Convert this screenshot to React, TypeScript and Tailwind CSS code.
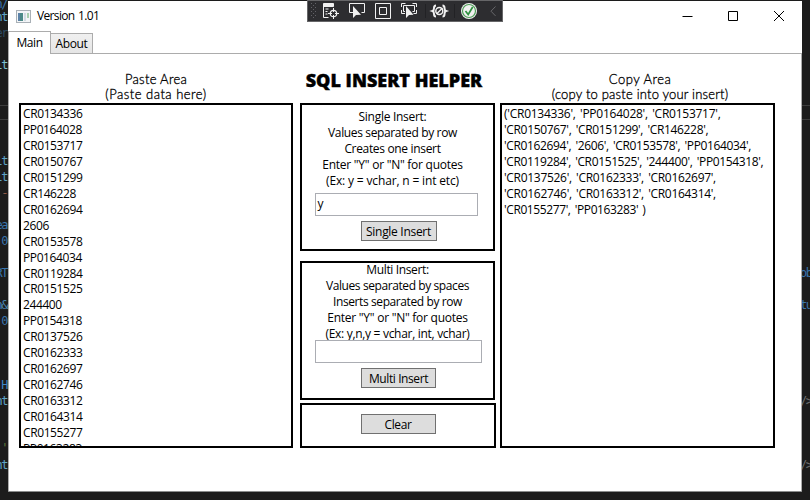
import React from "react";

const rows = [
  "CR0134336", "PP0164028", "CR0153717", "CR0150767", "CR0151299", "CR146228",
  "CR0162694", "2606", "CR0153578", "PP0164034", "CR0119284", "CR0151525",
  "244400", "PP0154318", "CR0137526", "CR0162333", "CR0162697", "CR0162746",
  "CR0163312", "CR0164314", "CR0155277", "PP0163283",
];

const output = [
  { text: "('CR0134336', 'PP0164028', 'CR0153717',", tracking: "tracking-[-0.25px]" },
  { text: "'CR0150767', 'CR0151299', 'CR146228',", tracking: "tracking-[-0.33px]" },
  { text: "'CR0162694', '2606', 'CR0153578', 'PP0164034',", tracking: "tracking-[-0.35px]" },
  { text: "'CR0119284', 'CR0151525', '244400', 'PP0154318',", tracking: "tracking-[-0.37px]" },
  { text: "'CR0137526', 'CR0162333', 'CR0162697',", tracking: "tracking-[-0.3px]" },
  { text: "'CR0162746', 'CR0163312', 'CR0164314',", tracking: "tracking-[-0.3px]" },
  { text: "'CR0155277', 'PP0163283' )", tracking: "tracking-[-0.4px]" },
];

type Fragment = { text: string; top: number; color: string };

const leftCode: Fragment[] = [
  { text: "n/", top: -4, color: "text-[#3a75ad]" },
  { text: "nt", top: 9, color: "text-[#5fa3c4]" },
  { text: "er", top: 25, color: "text-[#2d4a61]" },
  { text: "lt", top: 57, color: "text-[#7cc0cf]" },
  { text: "lt", top: 153, color: "text-[#5fa3c4]" },
  { text: "lt", top: 169, color: "text-[#5fa3c4]" },
  { text: "-", top: 185, color: "text-[#8f5a48]" },
  { text: "ea", top: 217, color: "text-[#3a75ad]" },
  { text: "0", top: 233, color: "text-[#3a75ad]" },
  { text: "RT", top: 265, color: "text-[#3a75ad]" },
  { text: "n&", top: 297, color: "text-[#4a86b5]" },
  { text: "0", top: 313, color: "text-[#3a75ad]" },
  { text: "H", top: 377, color: "text-[#3f86c6]" },
  { text: "nt", top: 393, color: "text-[#5fa3c4]" },
  { text: "'", top: 440, color: "text-[#5e7a3c]" },
  { text: "nt", top: 457, color: "text-[#5fa3c4]" },
];

const rightCode: Fragment[] = [
  { text: "ob", top: 265, color: "text-[#3a75ad]" },
  { text: "tu", top: 297, color: "text-[#3a75ad]" },
  { text: "/>", top: 393, color: "text-[#6e6e6e]" },
  { text: "/>", top: 457, color: "text-[#6e6e6e]" },
];

function CodeEdge({ items, side }: { items: Fragment[]; side: "left" | "right" }) {
  return (
    <div className="relative h-full w-2 shrink-0 overflow-hidden font-['DejaVu_Sans_Mono',monospace] text-[12px] leading-[13px]">
      <div className="absolute inset-x-0 top-[105px] h-[15px] border-y border-[#3d3d3d]" />
      {items.map((f) => (
        <span
          key={f.top}
          style={{ top: f.top }}
          className={`absolute mt-0.5 whitespace-nowrap ${side === "left" ? "right-px tracking-[-1.5px]" : "-left-0.5 tracking-[-1.5px]"} ${f.color}`}
        >
          {f.text}
        </span>
      ))}
    </div>
  );
}

function Line({ className, children }: { className: string; children: React.ReactNode }) {
  return <div className={`whitespace-nowrap ${className}`}>{children}</div>;
}

function PushButton({ className, children }: { className: string; children: React.ReactNode }) {
  return (
    <button className={`flex h-5 items-center justify-center whitespace-nowrap border border-[#707070] bg-[#dddddd] pt-0.5 ${className}`}>
      {children}
    </button>
  );
}

function DebugToolbar() {
  return (
    <svg className="absolute left-[307px] top-0" width="196" height="22" viewBox="0 0 196 22" fill="none">
      <rect x="0.5" y="0.5" width="195" height="21" fill="#2d2d30" stroke="#666668" />
      {[3, 7, 11, 15].map((y) => (
        <g key={y} fill="#626267">
          <rect x="4" y={y} width="1" height="1" />
          <rect x="8" y={y} width="1" height="1" />
          <rect x="6" y={y + 2} width="1" height="1" />
        </g>
      ))}
      <path d="M16.5 3.5h10v3h-10z" fill="#f1f1f1" stroke="#f1f1f1" />
      <path d="M16.5 6v11.5h5M18.5 9h3M18.5 11.5h2M18.5 14h2" stroke="#f1f1f1" />
      <circle cx="26.5" cy="13.5" r="3.2" stroke="#f1f1f1" strokeWidth="1.2" />
      <path d="M26.5 8v4M26.5 15v4M21 13.5h4M28 13.5h4" stroke="#f1f1f1" />
      <path d="M46 12.5h-3.500v-9h15v9h-3" stroke="#f1f1f1" />
      <path d="M46 6v12l3-3 5-.3z" fill="#f1f1f1" />
      <path d="M68.500 3.500h15v15h-15zM72.500 7.500h7v7h-7z" stroke="#f1f1f1" />
      <path d="M94.500 7v-3.500h4M105.500 3.500h4v3.500M109.500 10v3.500h-3M98 13.500h-3.500v-3.500M98 11.500h-1.500v-6h11v6h-2" stroke="#f1f1f1" />
      <path d="M99 6v12l3-3 4.500-.3z" fill="#f1f1f1" />
      <path d="M118.500 4v14M147.500 4v14" stroke="#222225" />
      <path d="M129 5.500q-2 0-2 2.500t-1.500 3q1.500.5 1.500 3t2 2.500M135.500 5.500q2 0 2 2.500t1.500 3q-1.500.5-1.500 3t-2 2.500" stroke="#f1f1f1" strokeWidth="2" />
      <circle cx="132.300" cy="11" r="3.500" stroke="#f1f1f1" strokeWidth="1.500" />
      <path d="M129.500 14l6-6" stroke="#f1f1f1" strokeWidth="1.500" />
      <circle cx="162" cy="11" r="8" fill="#f1f1f1" />
      <circle cx="162" cy="11" r="6.500" stroke="#4f9e58" strokeWidth="1.200" />
      <path d="M158.500 11l2.700 3.500 4.500-7.500" stroke="#2f9140" strokeWidth="1.700" />
      <path d="M188.500 6.500l-4.500 4.700 4.500 4.700" stroke="#68686b" />
    </svg>
  );
}

function TitleBar() {
  return (
    <div className="flex h-[30px] items-center pl-2">
      <svg width="15" height="13" viewBox="0 0 15 13">
        <rect x="0.5" y="0.5" width="14" height="12" fill="#f3f5f7" stroke="#a9b0b6" />
        <rect x="2" y="3" width="5" height="8" fill="#4c8a88" />
        <path d="M2 3h2v8h-2z" fill="#5b83a8" />
        <rect x="8" y="3" width="2" height="8" fill="#d3dce2" />
        <rect x="11" y="3" width="2" height="5" fill="#a8cfae" />
      </svg>
      <span className="ml-1.5 text-[12px] tracking-[-0.65px] [word-spacing:1px]">Version 1.01</span>
      <svg className="ml-auto mr-[17px]" width="103" height="12" viewBox="0 0 103 12" fill="none" stroke="#000">
        <path d="M0.500 6.500h10M46.500 1.500h9v9h-9zM92 1l10 10M102 1l-10 10" />
      </svg>
    </div>
  );
}

export default function App() {
  return (
    <div className="relative flex h-[500px] w-[810px] overflow-hidden bg-[#1c1c1c] font-['Open_Sans','Noto_Sans',sans-serif] text-[12px] leading-4 text-black">
      <CodeEdge items={leftCode} side="left" />
      <div className="mt-px flex h-[491px] w-[794px] shrink-0 flex-col border-b border-[#8a8c8c] bg-white">
        <TitleBar />
        <div className="flex h-[23px] items-end">
          <div className="z-10 flex h-[23px] w-[43px] items-center justify-center border-x border-t border-[#acacac] bg-white tracking-[-0.4px]">Main</div>
          <div className="flex h-[21px] w-[42px] items-center justify-center border-b border-r border-t border-[#acacac] bg-linear-to-b from-[#f0f0f0] to-[#e5e5e5] tracking-[-0.4px]">About</div>
          <div className="h-px flex-1 bg-[#acacac]" />
        </div>
        <div className="flex min-h-0 flex-1 border-x border-[#acacac] pl-2.5 pt-[18px]">
          <section className="flex w-[274px] flex-col">
            <div className="flex h-[31px] flex-col items-center font-['Lato',sans-serif] text-[13px] font-light leading-[15px] [-webkit-text-stroke:0.3px_black]">
              <Line className="tracking-[0.3px]">Paste Area</Line>
              <Line className="tracking-[0.5px]">(Paste data here)</Line>
            </div>
            <div className="h-[345px] overflow-hidden border-2 border-black pl-0.5 pt-px leading-[15.96px] tracking-[-0.4px]">
              {rows.map((r) => (
                <div key={r}>{r}</div>
              ))}
            </div>
          </section>
          <section className="ml-[7px] flex w-[196px] flex-col">
            <h1 className="-mt-px flex h-8 justify-center whitespace-nowrap pr-2 text-[18px] font-extrabold leading-[18px] [-webkit-text-stroke:0.4px_black]">SQL INSERT HELPER</h1>
            <div className="flex h-[148px] w-[195px] flex-col items-center border-2 border-black pr-2.5 pt-1">
              <Line className="tracking-[-0.28px]">Single Insert:</Line>
              <Line className="tracking-[-0.36px]">Values separated by row</Line>
              <Line className="tracking-[-0.33px]">Creates one insert</Line>
              <Line className="tracking-[-0.26px]">Enter "Y" or "N" for quotes</Line>
              <Line className="tracking-[-0.16px]">(Ex: y = vchar, n = int etc)</Line>
              <div className="ml-[7px] mt-1 h-[23px] w-[163px] border border-[#abadb3] pl-0.5 pt-0.5">y</div>
              <PushButton className="ml-3 mt-[5px] w-[76px] tracking-[-0.3px]">Single Insert</PushButton>
            </div>
            <div className="mt-2.5 flex h-[139px] w-[195px] flex-col items-center border-2 border-black">
              <Line className="-mt-px tracking-[-0.36px]">Multi Insert:</Line>
              <Line className="tracking-[-0.41px]">Values separated by spaces</Line>
              <Line className="tracking-[-0.4px]">Inserts separated by row</Line>
              <Line className="tracking-[-0.26px]">Enter "Y" or "N" for quotes</Line>
              <Line className="tracking-[-0.3px]">(Ex: y,n,y = vchar, int, vchar)</Line>
              <div className="-mt-0.5 ml-0.5 h-[23px] w-[167px] border border-[#abadb3] bg-white" />
              <PushButton className="ml-0.5 mt-[5px] w-[75px] tracking-[-0.4px]">Multi Insert</PushButton>
            </div>
            <div className="mt-[3px] flex h-[45px] w-[196px] justify-center border-2 border-black pt-[9px]">
              <PushButton className="w-[75px] tracking-[-0.4px]">Clear</PushButton>
            </div>
          </section>
          <section className="ml-1 flex w-[275px] flex-col">
            <div className="flex h-[31px] flex-col items-center pl-[5px] font-['Lato',sans-serif] text-[13px] font-light leading-[15px] [-webkit-text-stroke:0.3px_black]">
              <Line className="tracking-[0.5px]">Copy Area</Line>
              <Line className="tracking-[0.2px]">(copy to paste into your insert)</Line>
            </div>
            <div className="h-[345px] overflow-hidden border-2 border-black pl-0.5 pt-px leading-[15.96px] [word-spacing:1.5px]">
              {output.map((o) => (
                <Line key={o.text} className={o.tracking}>{o.text}</Line>
              ))}
            </div>
          </section>
        </div>
      </div>
      <CodeEdge items={rightCode} side="right" />
      <DebugToolbar />
    </div>
  );
}
